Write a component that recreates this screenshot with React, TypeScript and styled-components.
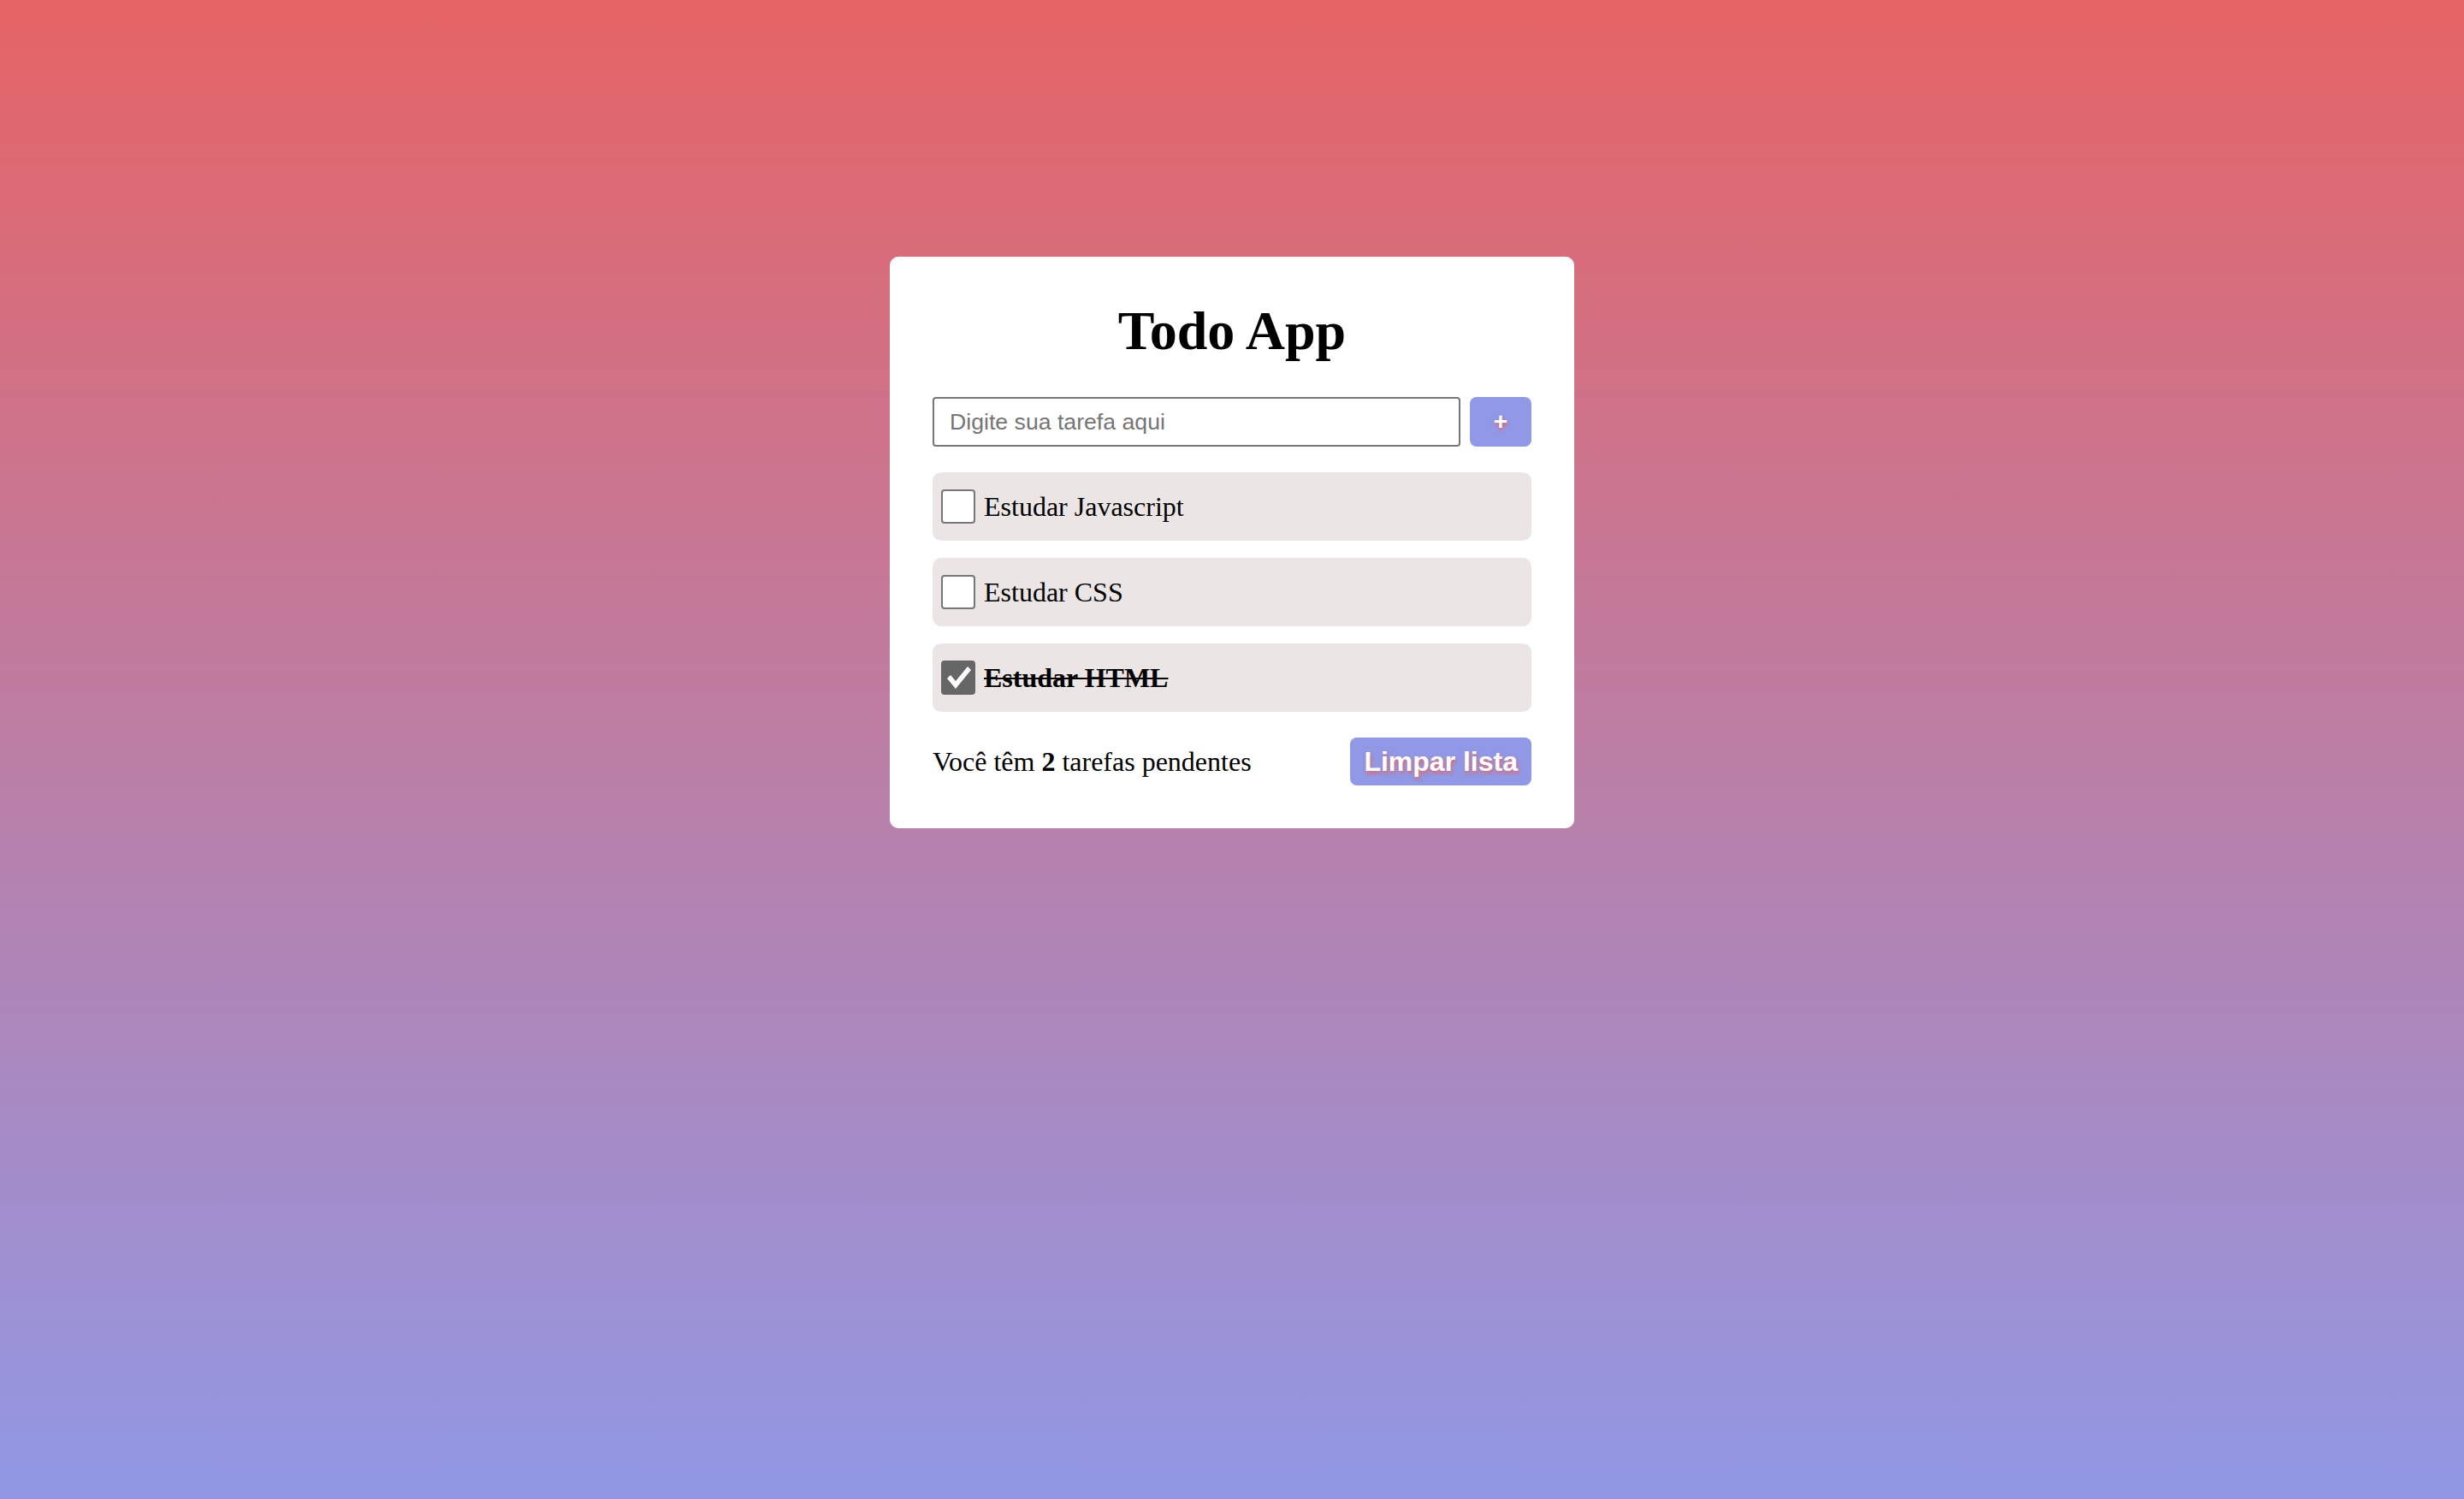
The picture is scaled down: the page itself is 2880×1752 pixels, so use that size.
import React, { useState } from "react";
import styled, { createGlobalStyle } from "styled-components";

const GlobalStyle = createGlobalStyle`
  html, body {
    margin: 0;
    padding: 0;
  }
  body {
    min-height: 100vh;
    background: linear-gradient(to bottom, #e66465, #9198e5);
    font-family: "Liberation Serif", "Times New Roman", serif;
    color: #000;
  }
  * { box-sizing: border-box; }
`;

const Page = styled.main`
  min-height: 100vh;
  display: flex;
  justify-content: center;
  align-items: flex-start;
  padding-top: 300px;
`;

const Card = styled.section`
  width: 800px;
  padding: 50px;
  background: #ffffff;
  border-radius: 10px;
`;

const Title = styled.h1`
  margin: 0 0 40px;
  text-align: center;
  font-family: "Liberation Serif", "Times New Roman", serif;
  font-weight: 700;
  font-size: 64px;
  line-height: normal;
`;

const Form = styled.form`
  display: flex;
  gap: 11px;
  margin-bottom: 30px;
`;

const TaskInput = styled.input`
  flex: 1;
  height: 58px;
  border: 2px solid #767676;
  border-radius: 4px;
  padding: 0 18px;
  font-family: "Liberation Sans", Arial, sans-serif;
  font-size: 26.67px;
  color: #000;
  background: #fff;
  outline: none;
  &::placeholder {
    color: #757575;
  }
`;

const AccentButton = styled.button`
  border: none;
  background: #9198e5;
  color: #ffffff;
  font-family: "Liberation Sans", Arial, sans-serif;
  font-weight: 700;
  text-shadow: 1px 3px 4px rgba(230, 100, 101, 0.95);
  cursor: pointer;
  display: flex;
  align-items: center;
  justify-content: center;
`;

const AddButton = styled(AccentButton)`
  width: 72px;
  height: 58px;
  border-radius: 8px;
  font-size: 28px;
`;

const List = styled.ul`
  list-style: none;
  margin: 0;
  padding: 0;
  display: flex;
  flex-direction: column;
  gap: 20px;
`;

const Item = styled.li`
  height: 80px;
  display: flex;
  align-items: center;
  gap: 10px;
  padding: 0 10px;
  background: #ebe5e5;
  border-radius: 10px;
`;

const CheckBox = styled.span<{ $checked: boolean }>`
  width: 40px;
  height: 40px;
  flex: none;
  display: flex;
  align-items: center;
  justify-content: center;
  border-radius: 4px;
  border: 2px solid ${(p) => (p.$checked ? "#666666" : "#767676")};
  background: ${(p) => (p.$checked ? "#666666" : "#ffffff")};
  cursor: pointer;
`;

const TaskLabel = styled.span<{ $done: boolean }>`
  font-family: "Liberation Serif", "Times New Roman", serif;
  font-size: 32px;
  line-height: normal;
  font-weight: ${(p) => (p.$done ? 700 : 400)};
  text-decoration: ${(p) => (p.$done ? "line-through" : "none")};
  text-decoration-thickness: 2px;
`;

const Footer = styled.footer`
  margin-top: 30px;
  display: flex;
  align-items: center;
  justify-content: space-between;
`;

const Pending = styled.p`
  margin: 0;
  font-family: "Liberation Serif", "Times New Roman", serif;
  font-size: 32px;
  line-height: normal;
`;

const ClearButton = styled(AccentButton)`
  height: 56px;
  padding: 0 16px;
  border-radius: 8px;
  font-size: 32px;
`;

type Task = { id: number; text: string; done: boolean };

const initial: Task[] = [
  { id: 1, text: "Estudar Javascript", done: false },
  { id: 2, text: "Estudar CSS", done: false },
  { id: 3, text: "Estudar HTML", done: true },
];

function Check({ checked, onToggle }: { checked: boolean; onToggle: () => void }) {
  return (
    <CheckBox $checked={checked} role="checkbox" aria-checked={checked} onClick={onToggle}>
      {checked && (
        <svg width="36" height="36" viewBox="0 0 36 36">
          <path
            d="M5 19 L9 15 L15 22 L29 5 L33 9 L15 31 Z"
            fill="#ffffff"
            strokeLinejoin="round"
          />
        </svg>
      )}
    </CheckBox>
  );
}

export default function App() {
  const [tasks, setTasks] = useState<Task[]>(initial);
  const [text, setText] = useState("");

  const pending = tasks.filter((t) => !t.done).length;

  const add = (e: React.FormEvent) => {
    e.preventDefault();
    if (!text.trim()) return;
    setTasks((ts) => [...ts, { id: Date.now(), text: text.trim(), done: false }]);
    setText("");
  };

  return (
    <>
      <GlobalStyle />
      <Page>
        <Card>
          <Title>Todo App</Title>
          <Form onSubmit={add}>
            <TaskInput
              placeholder="Digite sua tarefa aqui"
              value={text}
              onChange={(e) => setText(e.target.value)}
            />
            <AddButton type="submit">+</AddButton>
          </Form>
          <List>
            {tasks.map((t) => (
              <Item key={t.id}>
                <Check
                  checked={t.done}
                  onToggle={() =>
                    setTasks((ts) => ts.map((x) => (x.id === t.id ? { ...x, done: !x.done } : x)))
                  }
                />
                <TaskLabel $done={t.done}>{t.text}</TaskLabel>
              </Item>
            ))}
          </List>
          <Footer>
            <Pending>
              Você têm <b>{pending}</b> tarefas pendentes
            </Pending>
            <ClearButton type="button" onClick={() => setTasks([])}>
              Limpar lista
            </ClearButton>
          </Footer>
        </Card>
      </Page>
    </>
  );
}
